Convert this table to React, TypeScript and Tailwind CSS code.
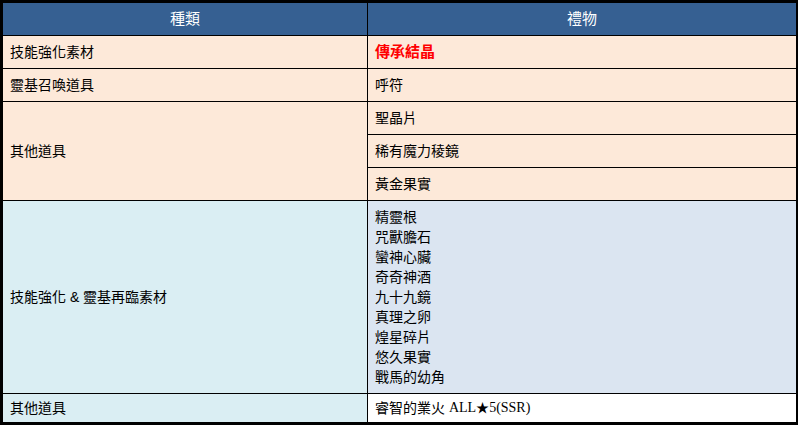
const cjk = "font-['Liberation_Sans','Noto_Sans_CJK_TC',sans-serif]";

const materials = [
  "精靈根",
  "咒獸膽石",
  "蠻神心臟",
  "奇奇神酒",
  "九十九鏡",
  "真理之卵",
  "煌星碎片",
  "悠久果實",
  "戰馬的幼角",
];

const peach = "bg-[#fde9d9]";
const aqua = "bg-[#daeef3]";

function Cell({ className = "", children }: { className?: string; children: React.ReactNode }) {
  return <div className={`flex items-center px-[7px] text-[14px] leading-[20px] text-black ${className}`}>{children}</div>;
}

export default function App() {
  return (
    <div className={`min-h-[428px] bg-white ${cjk}`}>
      <div className="grid h-[425px] w-[798px] grid-cols-[364px_1fr] grid-rows-[32px_32px_32px_32px_32px_32px_192px_28px] gap-px border-t-[3px] border-r-2 border-b-[3px] border-l-[3px] border-black bg-black">
        <div className="flex items-center justify-center bg-[#366092] text-[15px] text-white">種類</div>
        <div className="flex items-center justify-center bg-[#366092] text-[15px] text-white">禮物</div>

        <Cell className={peach}>技能強化素材</Cell>
        <Cell className={peach}>
          <span className="text-[15px] font-bold text-[#ff0000]">傳承結晶</span>
        </Cell>

        <Cell className={peach}>靈基召喚道具</Cell>
        <Cell className={peach}>呼符</Cell>

        <Cell className={`row-span-3 ${peach}`}>其他道具</Cell>
        <Cell className={peach}>聖晶片</Cell>
        <Cell className={peach}>稀有魔力稜鏡</Cell>
        <Cell className={peach}>黃金果實</Cell>

        <Cell className={aqua}>技能強化 &amp; 靈基再臨素材</Cell>
        <div className="flex flex-col justify-center bg-[#dbe5f1] px-[7px] text-[14px] leading-[20px] text-black">
          {materials.map((m) => (
            <div key={m}>{m}</div>
          ))}
        </div>

        <Cell className={aqua}>其他道具</Cell>
        <Cell className="bg-white">
          睿智的業火&nbsp;
          <span className="font-['Liberation_Serif','Noto_Sans_CJK_TC',serif] text-[14px]">
            ALL<span className="text-[13px]">★</span>5(SSR)
          </span>
        </Cell>
      </div>
    </div>
  );
}
